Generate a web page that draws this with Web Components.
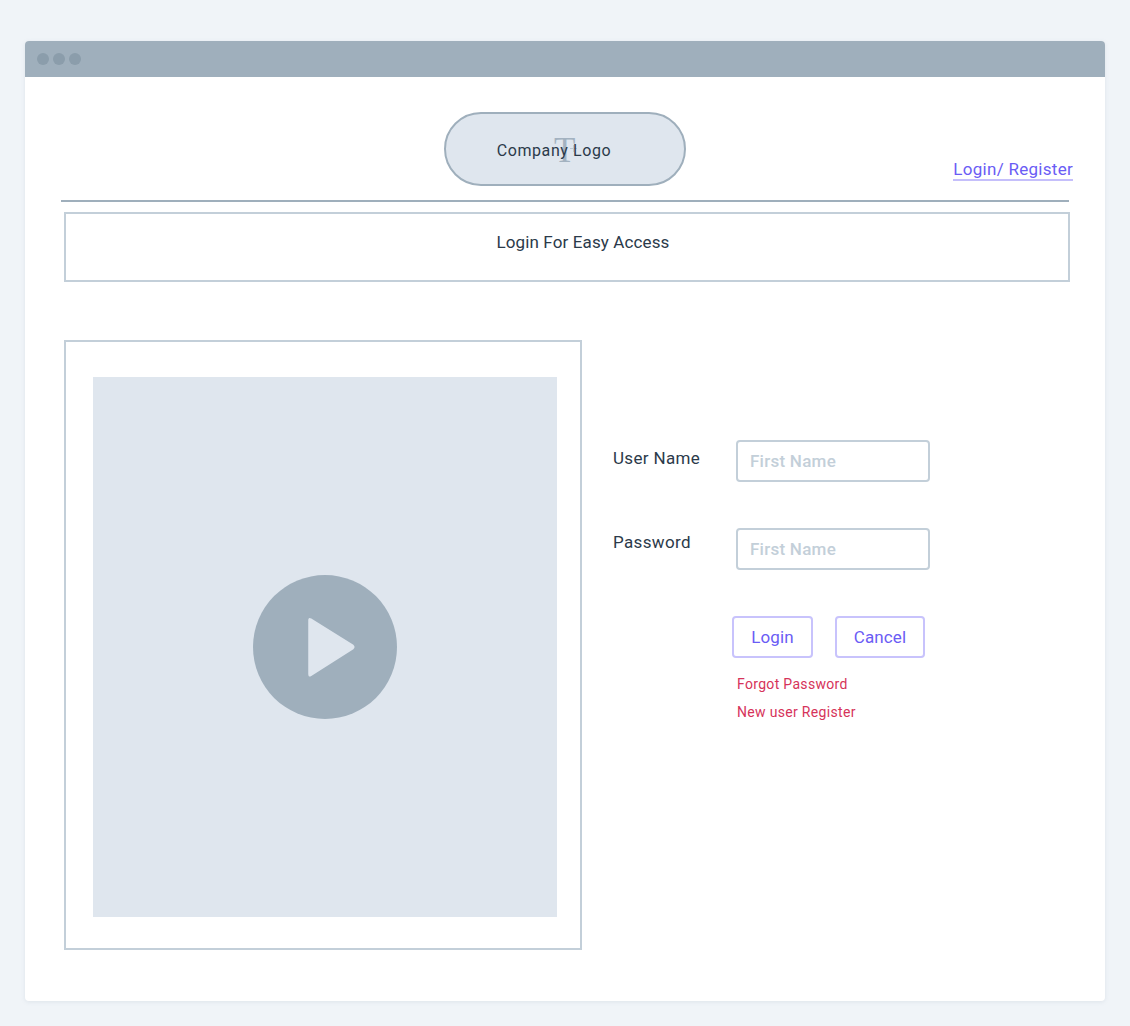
<!DOCTYPE html>
<html>
<head>
<meta charset="utf-8">
<title>Login wireframe</title>
<style>
  html, body { margin: 0; background: #f0f4f8; }
  body { padding: 41px 25px 25px; font-family: Roboto, "Liberation Sans", sans-serif; color: #2b3a4a; }
</style>
</head>
<body>
<browser-window>
  <page-header></page-header>
  <access-banner>Login For Easy Access</access-banner>
  <div style="display:flex;align-items:flex-start">
    <video-panel></video-panel>
    <login-form></login-form>
  </div>
</browser-window>

<script>
class BrowserWindow extends HTMLElement {
  constructor() {
    super();
    this.attachShadow({ mode: 'open' });
    this.shadowRoot.innerHTML = `
      <style>
        :host { display: block; width: 1080px; height: 960px; background: #fff; border-radius: 4px; box-shadow: 0 1px 4px rgba(120,140,160,.15); overflow: hidden; }
        .bar { height: 36px; background: #9fafbc; display: flex; align-items: center; gap: 4px; padding-left: 12px; }
        .bar i { width: 12px; height: 12px; border-radius: 50%; background: #8b9dab; }
        .content { padding: 35px 35px 0 39px; }
      </style>
      <div class="bar"><i></i><i></i><i></i></div>
      <div class="content"><slot></slot></div>
    `;
  }
}

class PageHeader extends HTMLElement {
  constructor() {
    super();
    this.attachShadow({ mode: 'open' });
    this.shadowRoot.innerHTML = `
      <style>
        :host { display: block; position: relative; margin-left: -3px; margin-right: 1px; border-bottom: 2px solid #9fafbc; height: 88px; }
        .row { display: flex; justify-content: center; }
        .logo { position: relative; box-sizing: border-box; width: 242px; height: 74px; border: 2px solid #9fafbc; border-radius: 37px; background: #dfe6ee; display: flex; align-items: center; justify-content: center; font-size: 16px; letter-spacing: .6px; padding: 2px 22px 0 0; }
        .logo span { position: relative; }
        .t { position: absolute; left: 108px; top: 17px; font: 400 35px/40px "Liberation Serif", serif; color: #a3b2c0; }
        .cross { position: absolute; left: 123px; top: 30px; width: 9px; height: 9px; }
        a { position: absolute; right: -4px; top: 47px; color: #6a5cf5; font-size: 17px; letter-spacing: .28px; text-decoration: none; border-bottom: 2px solid #c5bffb; line-height: 20px; }
      </style>
      <div class="row">
        <div class="logo">
          <b class="t">T</b>
          <svg class="cross" viewBox="0 0 9 9"><path d="M4.5 1v7M1 4.5h7" stroke="#bcc8d4" stroke-width="1" fill="none"/></svg>
          <span>Company Logo</span>
        </div>
      </div>
      <a href="#">Login/ Register</a>
    `;
  }
}

class AccessBanner extends HTMLElement {
  constructor() {
    super();
    this.attachShadow({ mode: 'open' });
    this.shadowRoot.innerHTML = `
      <style>
        :host { display: block; box-sizing: border-box; height: 70px; margin: 10px 0 58px 0; border: 2px solid #c3cfd9; text-align: center; padding: 18px 0 0 32px; font-size: 17px; line-height: 20px; letter-spacing: .12px; }
      </style>
      <slot></slot>
    `;
  }
}

class VideoPanel extends HTMLElement {
  constructor() {
    super();
    this.attachShadow({ mode: 'open' });
    this.shadowRoot.innerHTML = `
      <style>
        :host { display: block; box-sizing: border-box; width: 518px; height: 610px; border: 2px solid #c3cfd9; padding: 35px 23px 31px 27px; flex: none; }
        .screen { height: 540px; background: #dfe6ee; display: flex; align-items: center; justify-content: center; }
        .play { width: 144px; height: 144px; }
      </style>
      <div class="screen">
        <svg class="play" viewBox="0 0 144 144">
          <circle cx="72" cy="72" r="72" fill="#9fafbc"/>
          <path d="M57.5 44 L100 70.5 Q101.5 72 100 73.5 L57.5 100.5 Q56 101.5 56 99 L56 45 Q56 43 57.5 44 Z" fill="#dfe6ee" stroke="#dfe6ee" stroke-width="1.5" stroke-linejoin="round"/>
        </svg>
      </div>
    `;
  }
}

class FormField extends HTMLElement {
  constructor() {
    super();
    this.attachShadow({ mode: 'open' });
    this.shadowRoot.innerHTML = `
      <style>
        :host { display: grid; grid-template-columns: 123px 194px; align-items: start; height: 42px; }
        label { font-size: 17px; line-height: 20px; letter-spacing: .35px; }
        .box { box-sizing: border-box; height: 42px; border: 2px solid #c3cfd9; border-radius: 4px; padding: 0 12px; display: flex; align-items: center; font-size: 17px; font-weight: 500; letter-spacing: .25px; color: #c3cfd9; }
      </style>
      <label style="padding-top:var(--label-top,8px)"></label>
      <div class="box"></div>
    `;
    this.shadowRoot.querySelector('label').textContent = this.getAttribute('label');
    this.shadowRoot.querySelector('.box').textContent = this.getAttribute('placeholder');
  }
}

class LoginForm extends HTMLElement {
  constructor() {
    super();
    this.attachShadow({ mode: 'open' });
    this.shadowRoot.innerHTML = `
      <style>
        :host { display: block; padding: 100px 0 0 31px; }
        form-field { margin-bottom: 46px; }
        .actions { display: flex; gap: 22px; margin: 46px 0 0 119px; }
        .btn { box-sizing: border-box; height: 42px; border: 2px solid #c8c3fc; border-radius: 4px; background: #fff; color: #6a5cf5; font: 17px Roboto, sans-serif; letter-spacing: .15px; display: flex; align-items: center; justify-content: center; }
        .links { margin: 16px 0 0 124px; display: flex; flex-direction: column; gap: 8px; }
        .links a { color: #d6335a; font-size: 14px; line-height: 20px; letter-spacing: .32px; text-decoration: none; }
      </style>
      <form-field label="User Name" placeholder="First Name"></form-field>
      <form-field label="Password" placeholder="First Name" style="--label-top:4px;margin-bottom:0"></form-field>
      <div class="actions">
        <div class="btn" style="width:81px">Login</div>
        <div class="btn" style="width:90px">Cancel</div>
      </div>
      <div class="links">
        <a href="#">Forgot Password</a>
        <a href="#">New user Register</a>
      </div>
    `;
  }
}

customElements.define('browser-window', BrowserWindow);
customElements.define('page-header', PageHeader);
customElements.define('access-banner', AccessBanner);
customElements.define('video-panel', VideoPanel);
customElements.define('form-field', FormField);
customElements.define('login-form', LoginForm);
</script>
</body>
</html>
